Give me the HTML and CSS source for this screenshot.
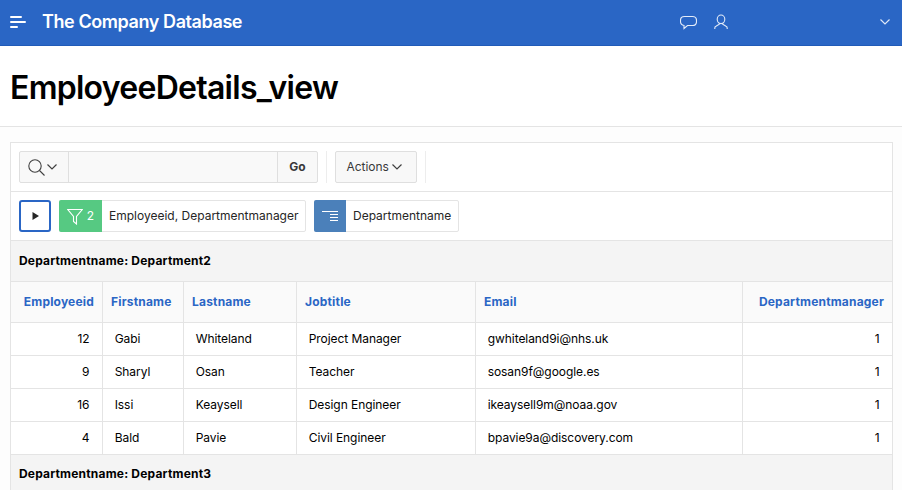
FILE: index.html
```html
<!DOCTYPE html>
<html lang="en">
<head>
<meta charset="utf-8">
<title>The Company Database</title>
<link rel="stylesheet" href="styles.css">
</head>
<body>
<header class="topbar">
  <svg class="menu-icon" width="16" height="12" viewBox="0 0 16 12" fill="none" stroke="#fff" stroke-width="2" stroke-linecap="round"><path d="M1 1h10M1 6h14M1 11h6"/></svg>
  <span class="brand">The Company Database</span>
  <nav class="topnav">
    <svg width="17" height="16" viewBox="0 0 17 16" fill="none" stroke="#e4ecf9" stroke-width="1.100"><path d="M4.500 2.500h8q4 0 4 4v1q0 4-4 4H7.500L4 14.500v-3Q.5 11 .5 7.500v-1q0-4 4-4z"/></svg>
    <svg class="user" width="14" height="16" viewBox="0 0 14 16" fill="none" stroke="#e4ecf9" stroke-width="1.100"><ellipse cx="7" cy="5.300" rx="3.800" ry="4.300"/><path d="M.8 15v-1q0-1.200 1.200-1.700L5.300 10.300V9M13.200 15v-1q0-1.200-1.200-1.700L8.700 10.300V9"/></svg>
    <svg class="more" width="10" height="6" viewBox="0 0 10 6" fill="none" stroke="#dfe8f7" stroke-width="1.200"><path d="M.5.5L5 5 9.500.5"/></svg>
  </nav>
</header>
<div class="titlebar"><h1>EmployeeDetails_view</h1></div>
<main class="report">
  <div class="toolbar">
    <div class="search">
      <button class="search-col" aria-label="Search columns">
        <svg width="17" height="17" viewBox="0 0 17 17" fill="none" stroke="#404040" stroke-width="1.100"><circle cx="7" cy="7" r="6.200"/><path d="M11.500 11.500l5 5"/></svg>
        <svg width="10" height="6" viewBox="0 0 10 6" fill="none" stroke="#404040" stroke-width="1.200"><path d="M.5.5L5 5 9.500.5"/></svg>
      </button>
      <input class="search-field" type="text" aria-label="Search">
      <button class="go">Go</button>
    </div>
    <div class="actions-wrap">
      <button class="actions"><span>Actions</span><svg width="10" height="6" viewBox="0 0 10 6" fill="none" stroke="#404040" stroke-width="1.200"><path d="M.5.5L5 5 9.500.5"/></svg></button>
    </div>
  </div>
  <div class="controls">
    <button class="expand" aria-label="Expand"><svg width="7" height="8" viewBox="0 0 7 8" fill="#262626"><path d="M.5 0L7 4 .5 8z"/></svg></button>
    <div class="chip chip-filter">
      <span class="chip-icon"><svg width="16" height="17" viewBox="0 0 16 17" fill="none" stroke="#fff" stroke-width="1.100"><path d="M.8 1.500h14.400L9.500 8.500V16L6.500 13.500v-5z"/></svg><span class="count">2</span></span>
      <span class="chip-label">Employeeid, Departmentmanager</span>
    </div>
    <div class="chip chip-break">
      <span class="chip-icon"><svg width="16" height="11" viewBox="0 0 16 11" fill="none" stroke="#fff"><path d="M0 .5h16M8 3.500h8M8 6.500h8M8 9.500h8"/></svg></span>
      <span class="chip-label">Departmentname</span>
    </div>
  </div>
  <table class="grid">
    <colgroup><col class="c1"><col class="c2"><col class="c3"><col class="c4"><col class="c5"><col class="c6"></colgroup>
    <tr class="group"><th colspan="6">Departmentname: Department2</th></tr>
    <tr class="heads"><th class="num">Employeeid</th><th>Firstname</th><th>Lastname</th><th>Jobtitle</th><th>Email</th><th class="num">Departmentmanager</th></tr>
    <tr><td class="num">12</td><td>Gabi</td><td>Whiteland</td><td>Project Manager</td><td>gwhiteland9i@nhs.uk</td><td class="num">1</td></tr>
    <tr><td class="num">9</td><td>Sharyl</td><td>Osan</td><td>Teacher</td><td>sosan9f@google.es</td><td class="num">1</td></tr>
    <tr><td class="num">16</td><td>Issi</td><td>Keaysell</td><td>Design Engineer</td><td>ikeaysell9m@noaa.gov</td><td class="num">1</td></tr>
    <tr><td class="num">4</td><td>Bald</td><td>Pavie</td><td>Civil Engineer</td><td>bpavie9a@discovery.com</td><td class="num">1</td></tr>
    <tr class="group next"><th colspan="6">Departmentname: Department3</th></tr>
  </table>
</main>
</body>
</html>
```
FILE: styles.css
```css
* { box-sizing: border-box; }
html { height: 100%; overflow: hidden; }
body {
  margin: 0;
  height: 490px;
  overflow: hidden;
  background: #fdfdfd;
  color: #000;
  font: 12px/16px Inter, "Liberation Sans", sans-serif;
}
svg { display: block; flex: none; }
button, input { font: inherit; margin: 0; padding: 0; border-radius: 0; outline: 0; }

.topbar {
  display: flex;
  align-items: center;
  height: 46px;
  padding: 0 12px 2px 10px;
  background: #2a66c5;
  border-bottom: 1px solid #215bb8;
  color: #fff;
}
.brand {
  margin-left: 16px;
  font-size: 18px;
  line-height: 24px;
  font-weight: 600;
  letter-spacing: -0.42px;
}
.topnav { display: flex; align-items: center; width: 210px; margin-left: auto; }
.user { margin-left: 16.5px; }
.more { margin-left: auto; }

.titlebar {
  height: 81px;
  padding: 21px 10px 0;
  background: #fff;
  border-bottom: 1px solid #e4e4e4;
}
h1 {
  margin: 0;
  font-size: 32px;
  line-height: 41px;
  font-weight: 600;
  letter-spacing: -0.73px;
}

.report {
  width: 883px;
  margin: 15px 0 0 10px;
  background: #fff;
  border: 1px solid #e4e4e4;
}
.toolbar, .controls {
  display: flex;
  align-items: center;
  height: 49px;
  padding: 0 8px;
  border-bottom: 1px solid #e4e4e4;
}
.search {
  display: flex;
  width: 299px;
  height: 32px;
  border: 1px solid #dfdfdf;
  border-radius: 2px;
  background: #f8f8f8;
}
.search-col {
  display: flex;
  align-items: center;
  gap: 2px;
  width: 49px;
  padding-left: 8px;
  background: none;
  border: 0;
  border-right: 1px solid #dfdfdf;
}
.search-field { width: 208px; background: #f9f9f9; border: 0; }
.go {
  flex: 1;
  background: none;
  border: 0;
  border-left: 1px solid #dfdfdf;
  color: #383838;
  font-weight: 700;
}
.actions-wrap {
  display: flex;
  height: 32px;
  margin-left: 8px;
  padding: 0 8px;
  border: solid #ededed;
  border-width: 0 1px;
}
.actions {
  display: flex;
  align-items: center;
  gap: 3px;
  width: 82px;
  padding-left: 10.5px;
  background: #f8f8f8;
  border: 1px solid #dfdfdf;
  border-radius: 2px;
  color: #383838;
  letter-spacing: -0.05px;
}

.controls { gap: 8px; }
.expand {
  display: flex;
  align-items: center;
  justify-content: center;
  width: 32px;
  height: 32px;
  background: #fff;
  border: 2px solid #2a66c5;
  border-radius: 3px;
}
.chip {
  display: flex;
  height: 32px;
  border: 1px solid #e4e4e4;
  border-radius: 2px;
  color: #262626;
}
.chip-icon {
  display: flex;
  align-items: center;
  justify-content: center;
  gap: 4px;
  margin: -1px 0 -1px -1px;
  border-radius: 2px 0 0 2px;
  color: #fff;
}
.chip-filter { width: 247px; }
.chip-filter .chip-icon { width: 43px; background: #56c982; }
.chip-break { width: 145px; }
.chip-break .chip-icon { width: 32px; background: #4b80ba; }
.chip-label { padding: 7px 0 0 7px; white-space: nowrap; }

.grid {
  width: 881px;
  table-layout: fixed;
  border-collapse: separate;
  border-spacing: 0;
}
.c1 { width: 92px; }
.c2 { width: 81px; }
.c3 { width: 113px; }
.c4 { width: 179px; }
.c5 { width: 267px; }
.c6 { width: 149px; }
th, td {
  padding: 0 12.5px 0 11.7px;
  border: solid #e4e4e4;
  border-width: 0 1px 1px 0;
  text-align: left;
  white-space: nowrap;
}
td { height: 33px; letter-spacing: -0.06px; }
th { height: 41px; padding: 0 8px; font-weight: 700; letter-spacing: 0.19px; }
th:last-child, td:last-child { border-right: 0; }
.group th { background: #f4f4f4; }
.group.next th { height: 39px; }
.heads th { background: #fafafa; color: #2a66c5; }
.num, .heads .num { text-align: right; }
```
